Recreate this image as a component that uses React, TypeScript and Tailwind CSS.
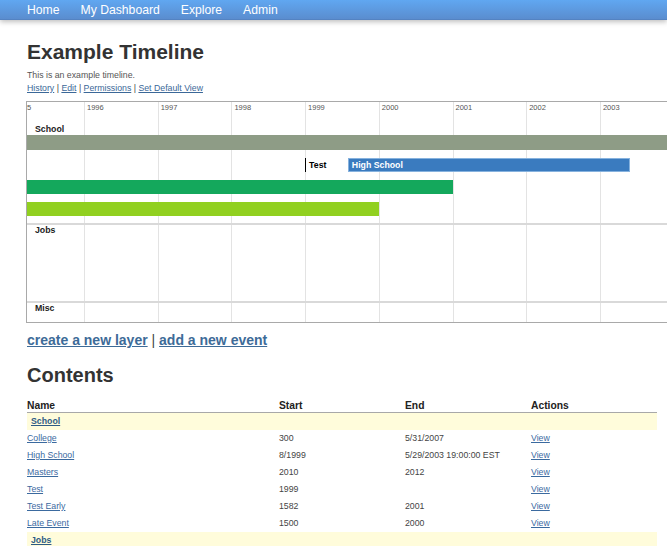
import React from "react";

const YW = 73.7;
const xOf = (y: number) => 57 + (y - 1996) * YW;
const lines = [1996, 1997, 1998, 1999, 2000, 2001, 2002, 2003, 2004];
const labels = [1996, 1997, 1998, 1999, 2000, 2001, 2002, 2003];

type BarProps = { start: number; end: number; className: string; children?: React.ReactNode };

function Bar({ start, end, className, children }: BarProps) {
  const left = Math.max(xOf(start), -2);
  const right = xOf(end);
  return (
    <div className={`absolute top-0 h-full ${className}`} style={{ left, width: right - left }}>
      {children}
    </div>
  );
}

const rows = [
  { name: "College", start: "300", end: "5/31/2007" },
  { name: "High School", start: "8/1999", end: "5/29/2003 19:00:00 EST" },
  { name: "Masters", start: "2010", end: "2012" },
  { name: "Test", start: "1999", end: "" },
  { name: "Test Early", start: "1582", end: "2001" },
  { name: "Late Event", start: "1500", end: "2000" },
];

export default function App() {
  return (
    <div className="h-screen w-full overflow-hidden bg-white font-['Liberation_Sans',Arial,Helvetica,sans-serif]">
      <nav className="relative z-10 flex h-[20px] items-center gap-[21px] border-b border-[#5483c2] bg-gradient-to-b from-[#60a7f1] to-[#5a8dcf] pl-[27px] text-[12.2px] leading-[20px] text-white shadow-[0_2px_5px_rgba(0,0,0,0.25)]">
        <a>Home</a>
        <a>My Dashboard</a>
        <a>Explore</a>
        <a>Admin</a>
      </nav>

      <main className="pl-[27px]">
        <h1 className="mt-[20px] text-[21px] font-bold leading-[24px] text-[#333]">Example Timeline</h1>
        <p className="mt-[5px] text-[8.75px] leading-[13px] text-[#555]">This is an example timeline.</p>
        <div className="text-[8.75px] leading-[13px] text-[#444]">
          <a className="text-[#3b6898] underline">History</a> | <a className="text-[#3b6898] underline">Edit</a> |{" "}
          <a className="text-[#3b6898] underline">Permissions</a> |{" "}
          <a className="text-[#3b6898] underline">Set Default View</a>
        </div>

        <div className="relative -ml-px mt-[6px] h-[222px] w-[720px] overflow-hidden border border-[#a9a9a9]">
          {lines.map((y) => (
            <div key={y} className="absolute top-0 bottom-0 w-px bg-[#e3e3e3]" style={{ left: xOf(y) }} />
          ))}
          <div className="absolute left-0 top-[1px] text-[7.5px] leading-[9px] text-[#555]">5</div>
          {labels.map((y) => (
            <div key={y} className="absolute top-[1px] text-[7.5px] leading-[9px] text-[#555]" style={{ left: xOf(y) + 3 }}>
              {y}
            </div>
          ))}

          <div className="relative flex flex-col">
            <div className="h-[123px] border-b-2 border-[#d9d9d9]">
              <div className="pl-[8px] pt-[22px] text-[8.75px] font-bold leading-[11px] text-[#222]">School</div>
              <div className="relative h-[15px]">
                <Bar start={300} end={2007.4} className="bg-[#8e9c86]" />
              </div>
              <div className="relative mt-[8px] h-[14px]">
                <div className="absolute top-0 h-full w-px bg-black" style={{ left: xOf(1999) }} />
                <div
                  className="absolute top-0 text-[8.75px] font-bold leading-[14px] text-black"
                  style={{ left: xOf(1999) + 4 }}
                >
                  Test
                </div>
                <Bar start={1999.58} end={2003.41} className="border border-[#86b2de] bg-[#3a7bbf]">
                  <div className="pl-[3px] text-[8.75px] font-bold leading-[12px] text-white">High School</div>
                </Bar>
              </div>
              <div className="relative mt-[8px] h-[14px]">
                <Bar start={1582} end={2001} className="bg-[#14a85c]" />
              </div>
              <div className="relative mt-[8px] h-[14px]">
                <Bar start={1500} end={2000} className="bg-[#91d020]" />
              </div>
            </div>
            <div className="h-[78px] border-b-2 border-[#d9d9d9]">
              <div className="pl-[8px] text-[8.75px] font-bold leading-[11px] text-[#222]">Jobs</div>
            </div>
            <div className="h-[19px]">
              <div className="pl-[8px] text-[8.75px] font-bold leading-[11px] text-[#222]">Misc</div>
            </div>
          </div>
        </div>

        <div className="mt-[9px] text-[14px] leading-[17px] text-[#444]">
          <a className="font-bold text-[#3d6b98] underline">create a new layer</a> |{" "}
          <a className="font-bold text-[#3d6b98] underline">add a new event</a>
        </div>

        <h2 className="mt-[14px] text-[20px] font-bold leading-[24px] text-[#333]">Contents</h2>

        <table className="mt-[12px] w-[630px] table-fixed border-collapse">
          <colgroup>
            <col className="w-[252px]" />
            <col className="w-[126px]" />
            <col className="w-[126px]" />
            <col className="w-[126px]" />
          </colgroup>
          <thead>
            <tr className="border-b border-[#a8a8a8]">
              <th className="text-left text-[10.3px] font-bold leading-[13px] text-[#222]">Name</th>
              <th className="text-left text-[10.3px] font-bold leading-[13px] text-[#222]">Start</th>
              <th className="text-left text-[10.3px] font-bold leading-[13px] text-[#222]">End</th>
              <th className="text-left text-[10.3px] font-bold leading-[13px] text-[#222]">Actions</th>
            </tr>
          </thead>
          <tbody className="text-[8.75px] leading-[17px] text-[#444]">
            <tr className="h-[17px] bg-[#fffcdb]">
              <td colSpan={4} className="pl-[4px]">
                <a className="font-bold text-[#2e5b86] underline">School</a>
              </td>
            </tr>
            {rows.map((r) => (
              <tr key={r.name} className="h-[17px]">
                <td>
                  <a className="text-[#3b6a9f] underline">{r.name}</a>
                </td>
                <td>{r.start}</td>
                <td>{r.end}</td>
                <td>
                  <a className="text-[#3b6a9f] underline">View</a>
                </td>
              </tr>
            ))}
            <tr className="h-[17px] bg-[#fffcdb]">
              <td colSpan={4} className="pl-[4px]">
                <a className="font-bold text-[#2e5b86] underline">Jobs</a>
              </td>
            </tr>
          </tbody>
        </table>
      </main>
    </div>
  );
}
